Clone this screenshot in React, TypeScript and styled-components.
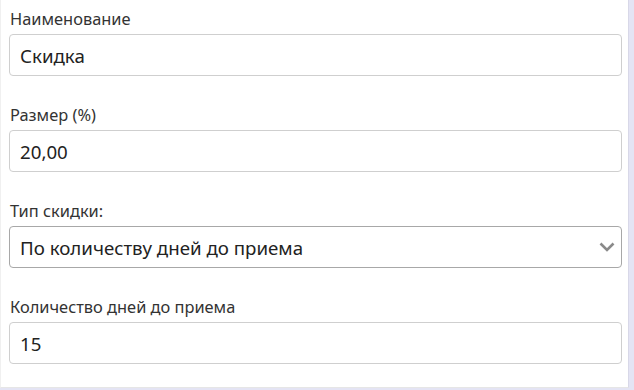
import React from 'react';
import styled, { createGlobalStyle } from 'styled-components';

const GlobalStyle = createGlobalStyle`
  body {
    margin: 0;
    background: #e4e4f4;
    font-family: "Noto Sans", "Open Sans", sans-serif;
  }
`;

const Page = styled.div`
  display: flex;
  flex-direction: row;
  height: 390px;
`;

const Panel = styled.div`
  width: 629px;
  height: 388px;
  background: #ffffff;
  border-left: 1px solid #f0f0f0;
  border-bottom: 1px solid #e6e6e6;
  border-right: 1px solid #d8d8e8;
  padding: 8px 6px 0 8px;
  box-sizing: border-box;
  display: flex;
  flex-direction: column;
`;

const Field = styled.div`
  display: flex;
  flex-direction: column;
  margin-bottom: 28px;
`;

const Label = styled.label`
  font-size: 16.4px;
  line-height: 22px;
  color: #333;
  margin-bottom: 4px;
  margin-left: 1px;
`;

interface BoxProps {
  dark?: boolean
}

const InputBox = styled.div<BoxProps>`
  display: flex;
  flex-direction: row;
  align-items: center;
  justify-content: space-between;
  height: 42px;
  box-sizing: border-box;
  border: 1px solid ${p => (p.dark ? '#a8a8a8' : '#cfcfcf')};
  border-radius: 4px;
  padding: 0 6px 0 10px;
  font-size: 18.7px;
  color: #222;
`;

const Chevron = () => (
  <svg width="16" height="12" viewBox="0 0 16 12">
    <path d="M1.5 2.5 L8 9 L14.5 2.5" fill="none" stroke="#8a8a8a" strokeWidth="2.6" />
  </svg>
);

const fields = [
  { label: 'Наименование', value: 'Скидка' },
  { label: 'Размер (%)', value: '20,00' },
  { label: 'Тип скидки:', value: 'По количеству дней до приема', select: true },
  { label: 'Количество дней до приема', value: '15' },
];

export default () => (
  <>
    <GlobalStyle />
    <Page>
      <Panel>
        {fields.map(f => (
          <Field key={f.label}>
            <Label>{f.label}</Label>
            <InputBox dark={f.select}>
              <span>{f.value}</span>
              {f.select && <Chevron />}
            </InputBox>
          </Field>
        ))}
      </Panel>
    </Page>
  </>
);
